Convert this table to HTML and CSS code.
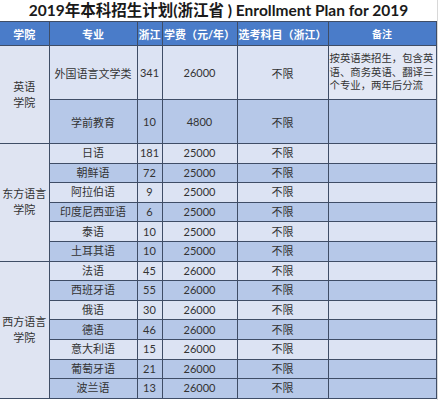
FILE: index.html
```html
<!DOCTYPE html>
<html lang="zh">
<head>
<meta charset="utf-8">
<link rel="stylesheet" href="styles.css">
</head>
<body>
<div class="page">
  <h1 class="title">2019年本科招生计划(浙江省 ) Enrollment Plan for 2019</h1>
  <table class="plan">
    <colgroup>
      <col class="c-school"><col class="c-major"><col class="c-num"><col class="c-fee"><col class="c-subj"><col class="c-note">
    </colgroup>
    <thead>
      <tr class="head">
        <th>学院</th><th>专业</th><th>浙江</th><th>学费（元/年）</th><th>选考科目（浙江）</th><th class="small">备注</th>
      </tr>
    </thead>
    <tbody>
      <tr class="r1 light">
        <td class="school" rowspan="2">英语<br>学院</td>
        <td>外国语言文学类</td><td>341</td><td>26000</td><td>不限</td>
        <td class="note">按英语类招生，包含英<br>语、商务英语、翻译三<br>个专业，两年后分流</td>
      </tr>
      <tr class="r2 dark">
        <td>学前教育</td><td>10</td><td>4800</td><td>不限</td><td></td>
      </tr>
      <tr class="row light">
        <td class="school" rowspan="6">东方语言<br>学院</td>
        <td>日语</td><td>181</td><td>25000</td><td>不限</td><td></td>
      </tr>
      <tr class="row dark"><td>朝鲜语</td><td>72</td><td>25000</td><td>不限</td><td></td></tr>
      <tr class="row light"><td>阿拉伯语</td><td>9</td><td>25000</td><td>不限</td><td></td></tr>
      <tr class="row dark"><td>印度尼西亚语</td><td>6</td><td>25000</td><td>不限</td><td></td></tr>
      <tr class="row light"><td>泰语</td><td>10</td><td>25000</td><td>不限</td><td></td></tr>
      <tr class="row dark"><td>土耳其语</td><td>10</td><td>25000</td><td>不限</td><td></td></tr>
      <tr class="row light">
        <td class="school" rowspan="7">西方语言<br>学院</td>
        <td>法语</td><td>45</td><td>26000</td><td>不限</td><td></td>
      </tr>
      <tr class="row dark"><td>西班牙语</td><td>55</td><td>26000</td><td>不限</td><td></td></tr>
      <tr class="row light"><td>俄语</td><td>30</td><td>26000</td><td>不限</td><td></td></tr>
      <tr class="row dark"><td>德语</td><td>46</td><td>26000</td><td>不限</td><td></td></tr>
      <tr class="row light"><td>意大利语</td><td>15</td><td>26000</td><td>不限</td><td></td></tr>
      <tr class="row dark"><td>葡萄牙语</td><td>21</td><td>26000</td><td>不限</td><td></td></tr>
      <tr class="row dark"><td>波兰语</td><td>13</td><td>26000</td><td>不限</td><td></td></tr>
    </tbody>
  </table>
</div>
</body>
</html>
```
FILE: styles.css
```css
html, body {
  margin: 0;
  padding: 0;
  background: #ffffff;
}
body {
  font-family: Lato, "Noto Sans CJK SC", sans-serif;
  color: #333333;
}
.page {
  width: 438px;
  height: 400px;
  overflow: hidden;
  border-right: 1px solid #d8d8d8;
  box-sizing: border-box;
}
.title {
  margin: 0;
  height: 21px;
  line-height: 21px;
  font-size: 15.5px;
  font-weight: 700;
  text-align: center;
  color: #1a1a1a;
  white-space: nowrap;
}
.plan {
  width: 436px;
  table-layout: fixed;
  border-collapse: collapse;
  font-size: 11px;
}
.c-school { width: 49px; }
.c-major { width: 88px; }
.c-num { width: 25px; }
.c-fee { width: 75px; }
.c-subj { width: 91px; }
.c-note { width: 108px; }
.plan th, .plan td {
  border: 1px solid #3f4d66;
  padding: 0 1px;
  text-align: center;
  vertical-align: middle;
  white-space: nowrap;
  overflow: hidden;
}
.plan tr > :first-child { border-left: none; }
.head th {
  background: #4a7cc9;
  color: #ffffff;
  font-weight: 700;
  height: 23px;
  font-size: 11px;
}
.head th.small {
  font-size: 10px;
}
.r1 td { height: 53px; }
.r2 td { height: 43px; }
.row td { height: 18.6px; line-height: 14px; }
.light td { background: #dce3f3; }
.dark td { background: #b6c8e8; }
.plan td.school {
  background: #dfe4f2;
  line-height: 16px;
}
.plan td.note {
  text-align: left;
  font-size: 10.4px;
  line-height: 13.5px;
  padding: 0 0 0 1px;
  background: #e3e8f5;
}
```
